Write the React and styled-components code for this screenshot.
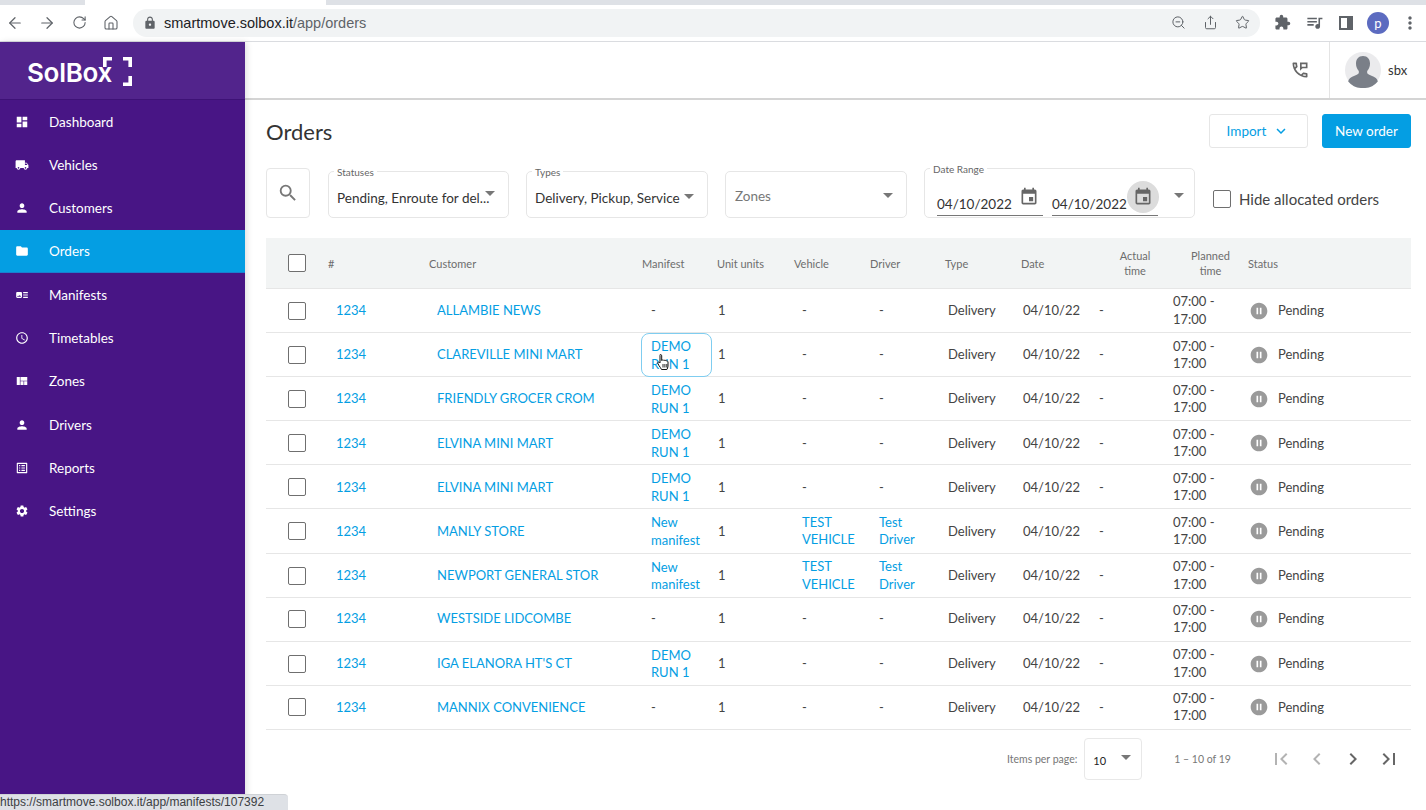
import React from "react";
import styled, { createGlobalStyle } from "styled-components";
import { ArrowLeft, ArrowRight, RotateCw, Home, ZoomOut, Share, Star } from "lucide-react";
import {
  MdDashboard,
  MdLocalShipping,
  MdPerson,
  MdFolder,
  MdArtTrack,
  MdAccessTime,
  MdViewQuilt,
  MdOutlineListAlt,
  MdSettings,
  MdOutlinePermPhoneMsg,
  MdKeyboardArrowDown,
  MdSearch,
  MdEvent,
  MdPauseCircleFilled,
  MdFirstPage,
  MdLastPage,
  MdChevronLeft,
  MdChevronRight,
  MdExtension,
  MdQueueMusic,
  MdLock,
  MdMoreVert,
} from "react-icons/md";

const FONT = `Lato, "Liberation Sans", sans-serif`;
const BLUE = "#049ee3";

const GlobalStyle = createGlobalStyle`
  html, body {
    margin: 0;
    height: 100%;
    overflow: hidden;
    background: #fff;
  }
  * { box-sizing: border-box; }
`;

const Page = styled.div`
  position: relative;
  height: 810px;
  display: flex;
  flex-direction: column;
  overflow: hidden;
  font-family: ${FONT};
`;

/* browser chrome */
const TabStrip = styled.div`
  height: 5px;
  display: flex;
  background: #dee1e6;
`;
const TabGap = styled.div`
  margin-left: 85px;
  width: 241px;
  background: #fff;
`;
const Toolbar = styled.div`
  height: 37px;
  display: flex;
  align-items: center;
  background: #fff;
  border-bottom: 1px solid #dadce0;
  padding-bottom: 1px;
  color: #5f6368;
`;
const ToolSlot = styled.span`
  width: 32px;
  height: 28px;
  flex: none;
  display: flex;
  align-items: center;
  justify-content: center;
`;
const NavGroup = styled.div`
  display: flex;
  margin-left: -1px;
`;
const Omnibox = styled.div`
  width: 1127px;
  height: 28px;
  margin: 0 6px;
  padding: 0 2px 0 10px;
  border-radius: 14px;
  background: #f1f3f4;
  display: flex;
  align-items: center;
`;
const Url = styled.div`
  flex: 1;
  margin-left: 7px;
  font-family: "Liberation Sans", sans-serif;
  font-size: 14.5px;
  color: #5f6368;
  & b {
    font-weight: 400;
    color: #202124;
  }
`;
const ChromeAvatar = styled.span`
  width: 22px;
  height: 22px;
  border-radius: 50%;
  background: #5c6bc0;
  color: #fff;
  font-size: 13px;
  display: flex;
  align-items: center;
  justify-content: center;
`;

/* app shell */
const Shell = styled.div`
  flex: 1;
  min-height: 0;
  display: flex;
`;
const Sidebar = styled.aside`
  width: 245px;
  flex: none;
  background: #481585;
  box-shadow: 2px 0 6px rgba(0, 0, 0, 0.12);
  position: relative;
  z-index: 2;
`;
const LogoBar = styled.div`
  height: 58px;
  padding: 15px 0 0 27px;
  background: #52248c;
  border-bottom: 1px solid #3e1276;
  position: relative;
`;
const LogoText = styled.div`
  font-family: Inter, sans-serif;
  font-size: 26px;
  line-height: 32px;
  font-weight: 600;
  letter-spacing: -0.3px;
  color: #fff;
`;
const LogoMark = styled.svg`
  position: absolute;
  left: 102px;
  top: 14px;
`;
const NavItem = styled.div`
  height: 43.3px;
  display: flex;
  align-items: center;
  padding-left: 15px;
  gap: 20px;
  color: #fff;
  font-size: 13.5px;
  background: ${(p) => (p.$active ? BLUE : "transparent")};
  border-bottom: ${(p) => (p.$active ? "1px solid #1a7fd0" : "none")};
  & svg {
    flex: none;
  }
`;
const Main = styled.main`
  flex: 1;
  min-width: 0;
  display: flex;
  flex-direction: column;
`;
const Header = styled.header`
  height: 58px;
  flex: none;
  display: flex;
  justify-content: flex-end;
  border-bottom: 2px solid #d4d4d4;
`;
const HeaderPhone = styled.div`
  width: 52px;
  display: flex;
  align-items: center;
  color: #666;
  padding-left: 13px;
`;
const UserBox = styled.div`
  width: 97px;
  border-left: 1px solid #e4e4e4;
  padding-left: 15px;
  display: flex;
  align-items: center;
  gap: 7px;
  font-size: 13px;
  color: #333;
`;
const Content = styled.div`
  flex: 1;
  padding: 14px 15px 0 21px;
`;
const TitleRow = styled.div`
  height: 34px;
  display: flex;
  align-items: center;
  justify-content: space-between;
`;
const Title = styled.h1`
  margin: 0;
  font-size: 22px;
  font-weight: 400;
  color: #333;
`;
const Actions = styled.div`
  display: flex;
  gap: 14px;
`;
const Button = styled.button`
  height: 34px;
  width: ${(p) => (p.$primary ? "89px" : "99px")};
  border-radius: 3px;
  border: 1px solid ${(p) => (p.$primary ? BLUE : "#e6e6e6")};
  background: ${(p) => (p.$primary ? BLUE : "#fff")};
  color: ${(p) => (p.$primary ? "#fff" : BLUE)};
  font-family: ${FONT};
  font-size: 13.5px;
  display: flex;
  align-items: center;
  justify-content: center;
  gap: 6px;
  padding: 0;
`;

/* filters */
const Filters = styled.div`
  margin-top: 20px;
  height: 50px;
  display: flex;
  align-items: flex-end;
  gap: 17px;
`;
const SearchBox = styled.div`
  width: 44px;
  height: 50px;
  border: 1px solid #e6e6e6;
  border-radius: 4px;
  display: flex;
  align-items: center;
  justify-content: center;
  color: #777;
  margin-right: 1px;
`;
const Field = styled.div`
  position: relative;
  width: ${(p) => p.$w}px;
  height: ${(p) => p.$h || 47}px;
  border: 1px solid #e6e6e6;
  border-radius: 5px;
  padding: ${(p) => (p.$label ? "18px" : "16px")} 0 0 ${(p) => (p.$label ? "8px" : "9px")};
  font-size: 13.5px;
  color: ${(p) => (p.$muted ? "#777" : "#333")};
  white-space: nowrap;
`;
const FieldLabel = styled.span`
  position: absolute;
  left: 5px;
  top: -6px;
  padding: 0 3px;
  background: #fff;
  font-size: 10px;
  line-height: 12px;
  color: #666;
`;
const Caret = styled.span`
  position: absolute;
  right: ${(p) => p.$r || 13}px;
  top: ${(p) => p.$t || 21}px;
  border-left: 5px solid transparent;
  border-right: 5px solid transparent;
  border-top: 5px solid #777;
`;
const DateRow = styled.div`
  display: flex;
  gap: 9px;
  padding: 5px 0 0 4px;
`;
const DateInput = styled.div`
  position: relative;
  width: 106px;
  height: 24px;
  padding-top: 4px;
  border-bottom: 1px solid #777;
  font-size: 13.5px;
  color: #333;
`;
const DateIcon = styled.span`
  position: absolute;
  right: ${(p) => (p.$on ? "-1px" : "-2px")};
  top: -11px;
  width: 32px;
  height: 32px;
  border-radius: 50%;
  background: ${(p) => (p.$on ? "#dcdcdc" : "transparent")};
  color: #666;
  display: flex;
  align-items: center;
  justify-content: center;
`;
const HideLabel = styled.label`
  display: flex;
  align-items: center;
  gap: 8px;
  margin: 0 0 10px 1px;
  font-size: 15px;
  color: #444;
`;
const Box = styled.span`
  display: block;
  flex: none;
  width: 18px;
  height: 18px;
  border: 1.5px solid #6f6f6f;
  border-radius: 2px;
  background: #fff;
`;

/* table */
const COLUMNS = "62px 101px 213px 75px 77px 76px 75px 76px 76px 76px 75px 1fr";

const Table = styled.div`
  margin-top: 20px;
`;
const HeadRow = styled.div`
  height: 51px;
  display: grid;
  grid-template-columns: ${COLUMNS};
  align-items: center;
  background: #f2f4f4;
  border-bottom: 1px solid #e6e6e6;
  font-size: 11px;
  line-height: 15px;
  color: #6d6d6d;
`;
const HeadCell = styled.div`
  text-align: ${(p) => (p.$center ? "center" : "left")};
`;
const CheckCell = styled.div`
  padding-left: 22px;
`;
const Row = styled.div`
  height: 44.1px;
  display: grid;
  grid-template-columns: ${COLUMNS};
  align-items: center;
  border-bottom: 1px solid #e6e6e6;
  font-size: 13px;
  line-height: 17.5px;
  color: #444;
`;
const Cell = styled.div`
  padding-left: ${(p) => p.$pad || 0}px;
  color: ${(p) => (p.$link ? BLUE : "inherit")};
  white-space: ${(p) => (p.$wrap ? "normal" : "nowrap")};
  width: ${(p) => (p.$w ? `${p.$w}px` : "auto")};
`;
const ManifestLink = styled.div`
  position: relative;
  width: 71px;
  height: 44px;
  margin-left: -1px;
  padding: 4px 0 0 9px;
  color: ${BLUE};
  border-radius: 8px;
  border: 1px solid ${(p) => (p.$hover ? "#7fcdf0" : "transparent")};
`;
const HandCursor = styled.svg`
  position: absolute;
  left: 15px;
  top: 19px;
`;
const Status = styled.div`
  display: flex;
  align-items: center;
  gap: 9px;
  padding-left: 1px;
  color: #9a9a9a;
  & span {
    color: #444;
  }
`;

/* pagination */
const Pager = styled.div`
  margin-top: 8px;
  display: flex;
  align-items: center;
  font-size: 10.5px;
  color: #777;
  padding-left: 741px;
`;
const PageSize = styled.div`
  position: relative;
  width: 58px;
  height: 42px;
  margin-left: 7px;
  border: 1px solid #e8e8e8;
  border-radius: 4px;
  padding: 15px 0 0 8px;
  font-size: 11px;
  color: #222;
`;
const Range = styled.div`
  width: 89px;
  margin-left: 32px;
  font-size: 10.5px;
`;
const PagerButton = styled.span`
  width: 36px;
  display: flex;
  justify-content: center;
  color: ${(p) => (p.$off ? "#b3b3b3" : "#666")};
`;
const StatusBubble = styled.div`
  position: absolute;
  left: 0;
  bottom: 0;
  width: 288px;
  height: 16px;
  padding-left: 0;
  border-radius: 0 4px 0 0;
  background: #dee1e6;
  border-top: 1px solid #cfd2d6;
  font-family: "Liberation Sans", sans-serif;
  font-size: 12px;
  line-height: 15px;
  color: #3c4043;
  z-index: 5;
  white-space: nowrap;
  overflow: hidden;
`;

const NAV = [
  ["Dashboard", MdDashboard],
  ["Vehicles", MdLocalShipping],
  ["Customers", MdPerson],
  ["Orders", MdFolder],
  ["Manifests", MdArtTrack],
  ["Timetables", MdAccessTime],
  ["Zones", MdViewQuilt],
  ["Drivers", MdPerson],
  ["Reports", MdOutlineListAlt],
  ["Settings", MdSettings],
];

const DEMO = "DEMO RUN 1";
const NEW = "New manifest";
const ORDERS = [
  { customer: "ALLAMBIE NEWS" },
  { customer: "CLAREVILLE MINI MART", manifest: DEMO, hover: true },
  { customer: "FRIENDLY GROCER CROM", manifest: DEMO },
  { customer: "ELVINA MINI MART", manifest: DEMO },
  { customer: "ELVINA MINI MART", manifest: DEMO },
  { customer: "MANLY STORE", manifest: NEW, assigned: true },
  { customer: "NEWPORT GENERAL STOR", manifest: NEW, assigned: true },
  { customer: "WESTSIDE LIDCOMBE" },
  { customer: "IGA ELANORA HT'S CT", manifest: DEMO },
  { customer: "MANNIX CONVENIENCE" },
];

function Avatar() {
  return (
    <svg width="36" height="36" viewBox="0 0 36 36">
      <circle cx="18" cy="18" r="18" fill="#ebebed" />
      <path
        d="M18 4c-4.6 0-7 3.2-7 7.5 0 3 1 5.4 2.6 7.2.5 1 .4 2.2-.2 3-1.6 1.4-6 2.4-8.2 4.2-1 .9-1.7 2.2-2 3.6A18 18 0 0 0 18 36a18 18 0 0 0 14.8-6.500c-.3-1.400-1-2.700-2-3.600-2.200-1.800-6.600-2.800-8.200-4.200-.6-.8-.7-2-.2-3C24 16.900 25 14.500 25 11.500 25 7.200 22.600 4 18 4z"
        fill="#7a7f88"
      />
    </svg>
  );
}

function Hand() {
  return (
    <svg width="0" height="0" />
  );
}

function Order({ order }) {
  const { customer, manifest, hover, assigned } = order;
  return (
    <Row>
      <CheckCell>
        <Box />
      </CheckCell>
      <Cell $link $pad={8}>1234</Cell>
      <Cell $link $pad={8}>{customer}</Cell>
      {manifest ? (
        <ManifestLink $hover={hover}>
          {manifest}
          {hover && (
            <HandCursor width="13" height="18" viewBox="0 0 13 18">
              <path
                d="M3.500 1.500c.8 0 1.200.6 1.200 1.300v4.700c.2-.7 2-.9 2.300.1.400-.6 1.900-.5 2.100.4.500-.4 1.900-.2 1.900 1v4.200c0 1.400-.7 2.300-1.100 3.300H4.500c-.6-1.300-1.500-2.500-2.700-4.200L.9 10.400c-.5-.8.600-1.900 1.500-1L3 10V2.800c0-.7-.2-1.300.5-1.300z"
                fill="#fff"
                stroke="#111"
                strokeWidth="1"
                strokeLinejoin="round"
              />
              <path d="M6 11v3.500M7.900 11v3.500M9.800 11v3.500" stroke="#111" strokeWidth="0.9" />
            </HandCursor>
          )}
        </ManifestLink>
      ) : (
        <Cell $pad={9}>-</Cell>
      )}
      <Cell $pad={1}>1</Cell>
      {assigned ? (
        <Cell $link $wrap $pad={8}>TEST VEHICLE</Cell>
      ) : (
        <Cell $pad={8}>-</Cell>
      )}
      {assigned ? (
        <Cell $link $wrap $pad={9} $w={60}>Test Driver</Cell>
      ) : (
        <Cell $pad={9}>-</Cell>
      )}
      <Cell $pad={3}>Delivery</Cell>
      <Cell $pad={2}>04/10/22</Cell>
      <Cell $pad={2}>-</Cell>
      <Cell $wrap>07:00 - 17:00</Cell>
      <Status>
        <MdPauseCircleFilled size={20} />
        <span>Pending</span>
      </Status>
    </Row>
  );
}

export default function App() {
  return (
    <Page>
      <GlobalStyle />
      <TabStrip>
        <TabGap />
      </TabStrip>
      <Toolbar>
        <NavGroup>
          <ToolSlot><ArrowLeft size={18} strokeWidth={1.6} /></ToolSlot>
          <ToolSlot><ArrowRight size={18} strokeWidth={1.6} /></ToolSlot>
          <ToolSlot><RotateCw size={15} strokeWidth={1.7} /></ToolSlot>
          <ToolSlot><Home size={16} strokeWidth={1.6} /></ToolSlot>
        </NavGroup>
        <Omnibox>
          <MdLock size={14} />
          <Url><b>smartmove.solbox.it</b>/app/orders</Url>
          <ToolSlot><ZoomOut size={15} strokeWidth={1.6} /></ToolSlot>
          <ToolSlot><Share size={15} strokeWidth={1.6} /></ToolSlot>
          <ToolSlot><Star size={15} strokeWidth={1.6} /></ToolSlot>
        </Omnibox>
        <ToolSlot><MdExtension size={17} /></ToolSlot>
        <ToolSlot><MdQueueMusic size={19} /></ToolSlot>
        <ToolSlot>
          <svg width="14" height="14" viewBox="0 0 14 14">
            <path d="M0 0h14v14H0z M2 2v10h6V2z" fill="#5f6368" fillRule="evenodd" />
          </svg>
        </ToolSlot>
        <ToolSlot><ChromeAvatar>p</ChromeAvatar></ToolSlot>
        <ToolSlot><MdMoreVert size={20} /></ToolSlot>
      </Toolbar>
      <Shell>
        <Sidebar>
          <LogoBar>
            <LogoText>SolBox</LogoText>
            <LogoMark width="31" height="31" viewBox="0 0 31 31">
              <path
                d="M1 11V1h9v3.500H4.600V11z M21 1h9v10h-3.600V4.500H21z M30 20v10h-9v-3.500h5.400V20z"
                fill="#fff"
              />
            </LogoMark>
          </LogoBar>
          {NAV.map(([label, Icon]) => (
            <NavItem key={label} $active={label === "Orders"}>
              <Icon size={14} />
              {label}
            </NavItem>
          ))}
        </Sidebar>
        <Main>
          <Header>
            <HeaderPhone><MdOutlinePermPhoneMsg size={20} /></HeaderPhone>
            <UserBox>
              <Avatar />
              sbx
            </UserBox>
          </Header>
          <Content>
            <TitleRow>
              <Title>Orders</Title>
              <Actions>
                <Button>
                  Import
                  <MdKeyboardArrowDown size={18} />
                </Button>
                <Button $primary>New order</Button>
              </Actions>
            </TitleRow>
            <Filters>
              <SearchBox><MdSearch size={22} /></SearchBox>
              <Field $w={181} $label>
                <FieldLabel>Statuses</FieldLabel>
                Pending, Enroute for del...
                <Caret $t={19} />
              </Field>
              <Field $w={182} $label>
                <FieldLabel>Types</FieldLabel>
                Delivery, Pickup, Service
                <Caret $t={22} />
              </Field>
              <Field $w={182} $muted>
                Zones
                <Caret $t={21} />
              </Field>
              <Field $w={271} $h={50} $label>
                <FieldLabel>Date Range</FieldLabel>
                <DateRow>
                  <DateInput>
                    04/10/2022
                    <DateIcon><MdEvent size={20} /></DateIcon>
                  </DateInput>
                  <DateInput>
                    04/10/2022
                    <DateIcon $on><MdEvent size={20} /></DateIcon>
                  </DateInput>
                </DateRow>
                <Caret $r={10} $t={24} />
              </Field>
              <HideLabel>
                <Box />
                Hide allocated orders
              </HideLabel>
            </Filters>
            <Table>
              <HeadRow>
                <CheckCell><Box /></CheckCell>
                <HeadCell>#</HeadCell>
                <HeadCell>Customer</HeadCell>
                <HeadCell>Manifest</HeadCell>
                <HeadCell>Unit units</HeadCell>
                <HeadCell>Vehicle</HeadCell>
                <HeadCell>Driver</HeadCell>
                <HeadCell>Type</HeadCell>
                <HeadCell>Date</HeadCell>
                <HeadCell $center>Actual<br />time</HeadCell>
                <HeadCell $center>Planned<br />time</HeadCell>
                <HeadCell>Status</HeadCell>
              </HeadRow>
              {ORDERS.map((order, i) => (
                <Order key={i} order={order} />
              ))}
            </Table>
            <Pager>
              Items per page:
              <PageSize>
                10
                <Caret $r={10} $t={16} />
              </PageSize>
              <Range>1 – 10 of 19</Range>
              <PagerButton $off><MdFirstPage size={24} /></PagerButton>
              <PagerButton $off><MdChevronLeft size={24} /></PagerButton>
              <PagerButton><MdChevronRight size={24} /></PagerButton>
              <PagerButton><MdLastPage size={24} /></PagerButton>
            </Pager>
          </Content>
        </Main>
      </Shell>
      <StatusBubble>https://smartmove.solbox.it/app/manifests/107392</StatusBubble>
    </Page>
  );
}
